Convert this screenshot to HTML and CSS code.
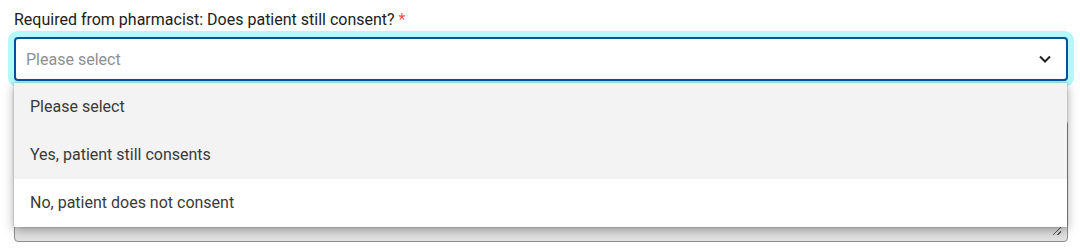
FILE: index.html
```html
<!DOCTYPE html>
<html lang="en">
<head>
<meta charset="utf-8">
<link rel="stylesheet" href="styles.css">
</head>
<body>
<div class="field">
  <label class="label">Required from pharmacist: Does patient still consent? <span class="req">*</span></label>
  <div class="select-wrap">
    <div class="select">
      <span class="placeholder">Please select</span>
      <svg class="chev" width="14" height="14" viewBox="0 0 14 14"><path d="M2 4.5 L7 9.5 L12 4.5" fill="none" stroke="#222" stroke-width="2"/></svg>
    </div>
    <ul class="menu">
      <li class="opt hl">Please select</li>
      <li class="opt hl">Yes, patient still consents</li>
      <li class="opt">No, patient does not consent</li>
    </ul>
  </div>
  <div class="textarea"><span class="grip"></span></div>
</div>
</body>
</html>
```
FILE: styles.css
```css
html, body { margin: 0; padding: 0; background: #fff; }
body { font-family: Roboto, "Liberation Sans", Arial, sans-serif; width: 1080px; height: 250px; overflow: hidden; }
.field { padding: 10px 12px 0 14px; }
.label { display: block; font-size: 16px; line-height: 20px; color: #212121; margin-bottom: 7px; }
.req { color: #f2574f; }
.select-wrap { position: relative; z-index: 2; }
.select {
  box-sizing: border-box; height: 44px; border: 2px solid #00529b; border-radius: 4px;
  box-shadow: 0 0 0 6px #b3f9fc; background: #fff;
  display: flex; align-items: center; justify-content: space-between; padding: 0 14px 0 10px;
}
.placeholder { font-size: 16px; color: #8f8f8f; }
.chev { display: block; }
.menu {
  position: absolute; top: 46px; left: 0; right: 1px; margin: 0; padding: 0; list-style: none;
  background: #fff; box-shadow: 0 3px 10px rgba(0,0,0,0.35), 0 0 2px rgba(0,0,0,0.25);
}
.opt { height: 48px; line-height: 48px; padding-left: 16px; font-size: 16px; color: #3a3a3a; }
.opt.hl { background: #f3f3f3; }
.textarea {
  position: relative; box-sizing: border-box; height: 122px; margin-top: 39px;
  border: 1px solid #8f8f8f; border-radius: 4px; background: #e2e2e2;
}
.grip {
  position: absolute; right: 6px; bottom: 6px; width: 8px; height: 8px;
  background: linear-gradient(135deg, transparent 45%, #555 45%, #555 55%, transparent 55%, transparent 75%, #555 75%, #555 85%, transparent 85%);
}
```
